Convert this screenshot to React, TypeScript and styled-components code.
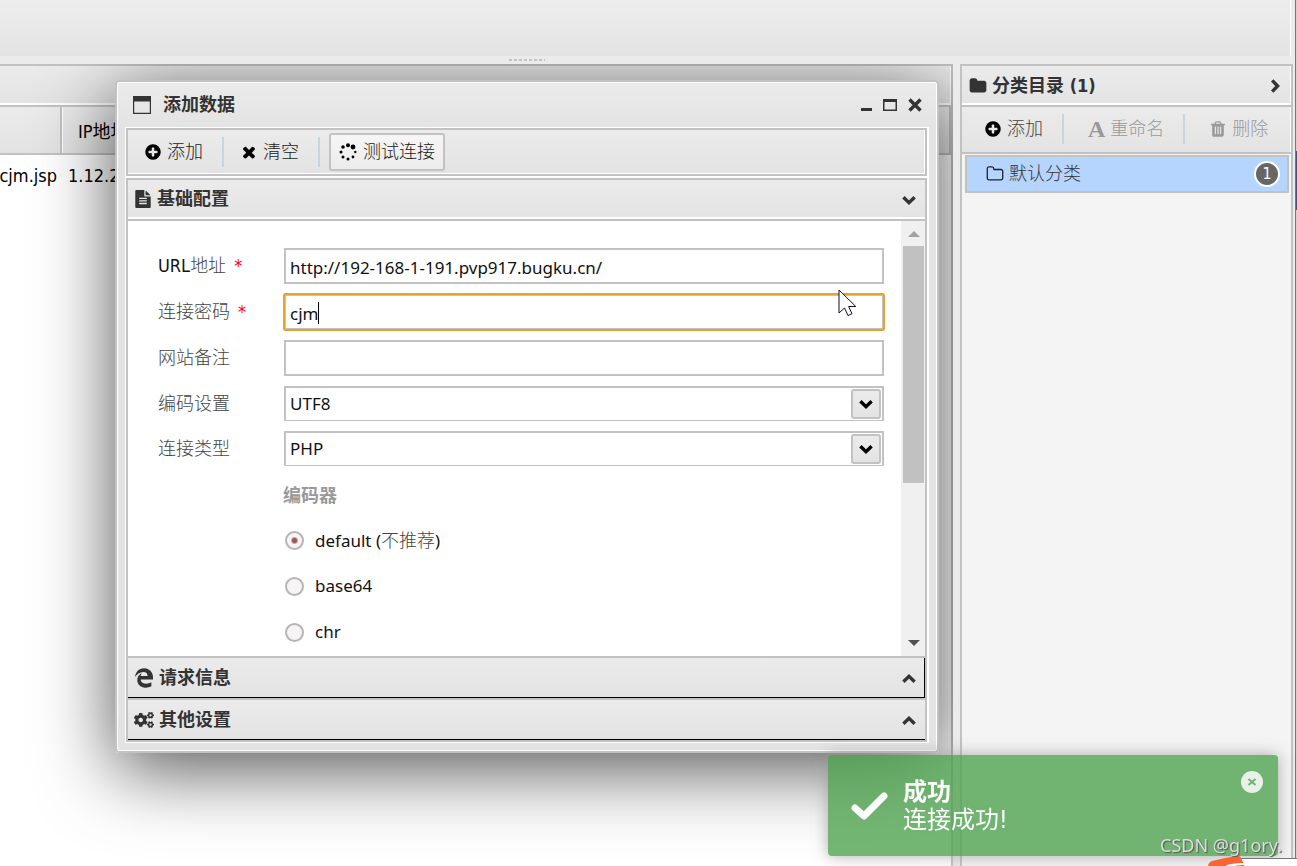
import React from "react";
import styled, { createGlobalStyle, css } from "styled-components";
import { FaCogs, FaEdgeLegacy } from "react-icons/fa";

const LINE = "#c2c2c2";
const BAR = "linear-gradient(#ebebeb, #e3e3e3)";
const UI = `"Noto Sans", "Noto Sans CJK SC", sans-serif`;
const HEADING = `"DejaVu Sans Condensed", "Noto Sans CJK SC", sans-serif`;

const GlobalStyle = createGlobalStyle`
  * { box-sizing: border-box; }
  body { margin: 0; background: #ebebeb; color: #000; font: 17px/24px ${UI}; }
  button, input, select { font: inherit; color: inherit; margin: 0; }
  button { border: 0; padding: 0; background: none; display: inline-flex; align-items: center; }
`;

const Page = styled.div`
  display: flex;
  height: 100vh;
  overflow: hidden;
`;

const Workspace = styled.div`
  flex: 1;
  min-width: 0;
  display: flex;
  flex-direction: column;
`;

const WindowEdge = styled.div`
  width: 4px;
  border-left: 2px solid #ebebeb;
  background:
    linear-gradient(90deg, #777 1px, transparent 1px),
    linear-gradient(#d0d0d0 151px, #0a64b4 151px, #0a64b4 210px, #d0d0d0 210px);
`;

const TopBar = styled.header`
  height: 56px;
  margin-right: 2px;
  border-right: 1px solid #fff;
  background: linear-gradient(#ededed, #e3e3e3);
`;

const Resizer = styled.div`
  height: 8px;
  display: flex;
  justify-content: center;
  padding: 3px 240px 0 0;
`;

const Grip = styled.span`
  width: 36px;
  height: 2px;
  background: repeating-linear-gradient(90deg, ${LINE} 0 3px, transparent 3px 5px);
`;

const Columns = styled.div`
  flex: 1;
  min-height: 0;
  display: flex;
  gap: 7px;
`;

const Main = styled.main`
  flex: 1;
  min-width: 0;
  position: relative;
  overflow: hidden;
`;

const Sheet = styled.section`
  height: 100%;
  border: solid ${LINE};
  border-width: 2px 2px 0 0;
  background: #fff;
`;

const SheetHead = styled.div`
  height: 41px;
  border-bottom: 2px solid ${LINE};
  box-shadow: inset -1px -2px #fff;
  background: ${BAR};
`;

const Grid = styled.table`
  width: 100%;
  border-collapse: separate;
  border-spacing: 0;
  table-layout: fixed;
  white-space: nowrap;
  font: 18px/24px ${HEADING};
`;

const HeadCell = styled.th`
  height: 48px;
  padding: 4px 0 0 16px;
  text-align: left;
  font-weight: 400;
  border-right: 2px solid ${LINE};
  border-bottom: 2px solid ${LINE};
  background: ${BAR};
  & + & { box-shadow: inset 1px 0 #fff; }
`;

const Cell = styled.td`
  height: 42px;
  padding: 0 0 0 6px;
`;

const NameCell = styled(Cell)`
  padding: 0 5px 0 0;
  direction: rtl;
  overflow: hidden;
`;

const Dialog = styled.section`
  position: absolute;
  top: 16px;
  left: 115px;
  right: 14px;
  padding: 0 8px 8px;
  border: 2px solid ${LINE};
  border-radius: 4px;
  background: linear-gradient(#ebebeb, #e3e3e3 46px);
  box-shadow: inset 0 0 0 1px #fff, 0 16px 76px rgba(0, 0, 0, 0.68);
`;

const DialogHead = styled.div`
  height: 45px;
  display: flex;
  align-items: center;
  padding: 0 7px 0 8px;
  gap: 12px;
`;

const Title = styled.h2`
  flex: 1;
  margin: 0;
  color: #333;
  font: 700 18px/24px ${HEADING};
`;

const WindowButtons = styled.div`
  display: flex;
  gap: 11px;
`;

const DialogBody = styled.div`
  display: flex;
  flex-direction: column;
  gap: 2px;
  border: solid #fff;
  border-width: 1px 2px 1px 1px;
  background: #fff;
`;

const Toolbar = styled.div`
  height: 48px;
  display: flex;
  align-items: center;
  border: 2px solid ${LINE};
  box-shadow: inset -1px -1px #fff;
  background: ${BAR};
`;

const Tool = styled.button<{ $active?: boolean }>`
  height: 38px;
  gap: 5px;
  padding: 0 19px 0 16px;
  color: #222;
  font: 300 18px/24px ${HEADING};
  svg { color: #000; }
  ${(p) =>
    p.$active &&
    css`
      margin-left: 9px;
      padding: 0 8px;
      gap: 6px;
      border: 2px solid ${LINE};
      border-radius: 3px;
      background: linear-gradient(#f6f6f6, #ececec);
    `}
`;

const Divider = styled.span`
  width: 2px;
  height: 30px;
  background: #c5d7de;
`;

const Accordion = styled.div`
  border: 2px solid ${LINE};
`;

const PanelHead = styled.button<{ $closed?: boolean; $edge?: boolean }>`
  width: 100%;
  height: ${(p) => (p.$closed ? 42 : 41)}px;
  gap: 5px;
  padding: 0 8px 2px 6px;
  color: #333;
  font: 700 18px/24px ${HEADING};
  border-bottom: 2px solid ${LINE};
  box-shadow: inset 0 -2px #fff;
  background: ${BAR};
  ${(p) =>
    p.$closed &&
    css`
      padding-bottom: 0;
      border-top: 2px solid ${LINE};
      border-bottom: 1px solid #000;
      box-shadow: ${p.$edge ? "inset -1px 0 #000" : "none"};
    `}
`;

const Grow = styled.span`
  flex: 1;
  display: flex;
  justify-content: flex-end;
`;

const HeadMark = styled(Grow)`
  padding-top: 2px;
`;

const PanelBody = styled.div`
  display: flex;
  height: 435px;
  overflow: hidden;
  background: #fff;
`;

const Form = styled.form`
  flex: 1;
  min-width: 0;
  display: flex;
  flex-direction: column;
  gap: 10px;
  padding: 27px 17px 0 30px;
`;

const Row = styled.div<{ $short?: boolean }>`
  display: flex;
  align-items: center;
  height: ${(p) => (p.$short ? 35 : 36)}px;
`;

const Label = styled.label`
  width: 126px;
  color: #444;
  font: 300 18px/24px ${HEADING};
  i { margin-left: 8px; color: #f00; font-style: normal; }
  b { color: #111; font-weight: 400; }
`;

const Field = styled.div`
  flex: 1;
  position: relative;
  display: flex;
`;

const Input = styled.input<{ $focus?: boolean }>`
  flex: 1;
  min-width: 0;
  height: 36px;
  padding: 2px 4px 0;
  border: 2px solid ${LINE};
  outline: none;
  background: #fff;
  color: #111;
  ${(p) =>
    p.$focus &&
    css`
      border-width: 1px;
      margin: 0 1px;
      height: 34px;
      padding: 2px 4px 0;
      border-radius: 1px;
      box-shadow: 0 0 0 2px #e5a32e;
    `}
`;

const Caret = styled.span`
  position: absolute;
  left: 34px;
  top: 7px;
  width: 1px;
  height: 22px;
  background: #000;
`;

const Select = styled.select`
  flex: 1;
  height: 35px;
  padding: 0 4px;
  appearance: none;
  border: 2px solid ${LINE};
  border-bottom-width: 1px;
  border-radius: 0;
  background: #fff;
  color: #111;
`;

const DropMark = styled.span`
  position: absolute;
  right: 3px;
  top: 3px;
  width: 30px;
  height: 30px;
  display: grid;
  place-items: center;
  border: 2px solid ${LINE};
  border-radius: 3px;
  background: ${BAR};
  pointer-events: none;
`;

const Group = styled.fieldset`
  margin: 0;
  padding: 0 0 0 125px;
  border: 0;
  display: flex;
  flex-direction: column;
  gap: 10px;
`;

const Legend = styled.legend`
  height: 46px;
  padding: 0;
  color: #999;
  font: 700 18px/40px ${HEADING};
`;

const Option = styled.label`
  display: flex;
  align-items: center;
  gap: 11px;
  height: 36px;
  padding-left: 2px;
  color: #111;
  small { color: #444; font-size: 18px; font-weight: 300; }
`;

const Radio = styled.input`
  appearance: none;
  width: 19px;
  height: 19px;
  border: 2px solid #b9b3b5;
  border-radius: 50%;
  background: #f5f5f5;
  &:checked {
    background: radial-gradient(circle, #9c5757 2px, #f5f5f5 4px);
  }
`;

const Scrollbar = styled.div`
  width: 24px;
  display: flex;
  flex-direction: column;
  align-items: center;
  padding-left: 1px;
  background: #f0f0f0;
`;

const Arrow = styled.span<{ $down?: boolean }>`
  margin: ${(p) => (p.$down ? "auto 0 10px" : "10px 0 9px")};
  border: solid transparent;
  border-width: 0 6px;
  ${(p) => (p.$down ? "border-top: 6px solid #505050;" : "border-bottom: 6px solid #a3a3a3;")}
`;

const Thumb = styled.span`
  width: 21px;
  height: 237px;
  background: #c1c1c1;
`;

const Side = styled.aside`
  width: 333px;
  display: flex;
  flex-direction: column;
  border: solid ${LINE};
  border-width: 2px 2px 0;
  background: #f4f4f4;
`;

const SideHead = styled.div`
  height: 41px;
  display: flex;
  align-items: center;
  gap: 5px;
  padding: 0 8px 0 7px;
  border-bottom: 2px solid ${LINE};
  box-shadow: inset -1px -2px #fff;
  background: ${BAR};
  color: #333;
`;

const SideTools = styled.div`
  height: 47px;
  display: flex;
  align-items: center;
  padding-bottom: 2px;
  border-bottom: 2px solid ${LINE};
  box-shadow: inset -1px 0 #fff;
  background: ${BAR};
`;

const SideTool = styled(Tool)`
  padding: 0 19px 0 22px;
  color: #444;
  &:disabled { color: #999; padding-left: 24px; }
  &:disabled svg { color: #999; }
`;

const LetterMark = styled.span`
  font: 700 24px/24px "Liberation Serif", serif;
`;

const Item = styled.button`
  height: 38px;
  margin: 1px 2px 0 3px;
  padding: 0 7px 0 19px;
  gap: 5px;
  border: 2px solid ${LINE};
  background: #b5d5ff;
  color: #333;
  font: 300 18px/24px ${HEADING};
  svg { color: #222; }
`;

const Badge = styled.span`
  width: 26px;
  height: 26px;
  border: 2px solid #fff;
  border-radius: 50%;
  background: #666;
  color: #fff;
  font-size: 16px;
  font-weight: 400;
  line-height: 22px;
  text-align: center;
`;

const Toast = styled.div`
  position: fixed;
  right: 19px;
  bottom: 10px;
  width: 450px;
  height: 101px;
  display: flex;
  align-items: center;
  gap: 15px;
  padding: 0 14px 0 23px;
  border-radius: 4px;
  background: #51a351;
  box-shadow: 0 0 16px #999;
  color: #fff;
  font: 24px/28px ${HEADING};
  opacity: 0.8;
`;

const ToastText = styled.div`
  flex: 1;
  strong { display: block; }
`;

const ToastClose = styled.button`
  align-self: flex-start;
  margin-top: 15px;
`;

const Watermark = styled.span`
  position: fixed;
  right: 15px;
  bottom: 9px;
  color: #dcdcdc;
  font: 18px/24px "Noto Sans", sans-serif;
  text-shadow: 1px 1px 1px #555;
`;

const ImeBar = styled.div`
  position: fixed;
  right: 0;
  bottom: 0;
  width: 90px;
  height: 14px;
`;

const PointerMark = styled.svg`
  position: absolute;
  top: 207px;
  right: 80px;
`;

const shapes = {
  plus: "M1344 960v-128q0-26-19-45t-45-19h-256v-256q0-26-19-45t-45-19h-128q-26 0-45 19t-19 45v256h-256q-26 0-45 19t-19 45v128q0 26 19 45t45 19h256v256q0 26 19 45t45 19h128q26 0 45-19t19-45v-256h256q26 0 45-19t19-45zm320-64q0 209-103 385.5t-279.5 279.5-385.5 103-385.5-103-279.5-279.5-103-385.5 103-385.5 279.5-279.5 385.5-103 385.5 103 279.5 279.5 103 385.5z",
  times: "M1490 1322q0 40-28 68l-136 136q-28 28-68 28t-68-28l-294-294-294 294q-28 28-68 28t-68-28l-136-136q-28-28-28-68t28-68l294-294-294-294q-28-28-28-68t28-68l136-136q28-28 68-28t68 28l294 294 294-294q28-28 68-28t68 28l136 136q28 28 28 68t-28 68l-294 294 294 294q28 28 28 68z",
  file: "M1596 476q14 14 28 36h-472v-472q22 14 36 28zm-476 164h544v1056q0 40-28 68t-68 28h-1344q-40 0-68-28t-28-68v-1600q0-40 28-68t68-28h800v544q0 40 28 68t68 28zm160 736v-64q0-14-9-23t-23-9h-704q-14 0-23 9t-9 23v64q0 14 9 23t23 9h704q14 0 23-9t9-23zm0-256v-64q0-14-9-23t-23-9h-704q-14 0-23 9t-9 23v64q0 14 9 23t23 9h704q14 0 23-9t9-23zm0-256v-64q0-14-9-23t-23-9h-704q-14 0-23 9t-9 23v64q0 14 9 23t23 9h704q14 0 23-9t9-23z",
  folder: "M1728 608v704q0 92-66 158t-158 66h-1216q-92 0-158-66t-66-158v-960q0-92 66-158t158-66h320q92 0 158 66t66 158v32h672q92 0 158 66t66 158z",
  folderOpen: "M1600 1312v-704q0-40-28-68t-68-28h-704q-40 0-68-28t-28-68v-64q0-40-28-68t-68-28h-320q-40 0-68 28t-28 68v960q0 40 28 68t68 28h1216q40 0 68-28t28-68zm128-704v704q0 92-66 158t-158 66h-1216q-92 0-158-66t-66-158v-960q0-92 66-158t158-66h320q92 0 158 66t66 158v32h672q92 0 158 66t66 158z",
  trash: "M704 1376v-704q0-14-9-23t-23-9h-64q-14 0-23 9t-9 23v704q0 14 9 23t23 9h64q14 0 23-9t9-23zm256 0v-704q0-14-9-23t-23-9h-64q-14 0-23 9t-9 23v704q0 14 9 23t23 9h64q14 0 23-9t9-23zm256 0v-704q0-14-9-23t-23-9h-64q-14 0-23 9t-9 23v704q0 14 9 23t23 9h64q14 0 23-9t9-23zm-544-992h448l-48-117q-7-9-17-11h-317q-10 2-17 11zm928 32v64q0 14-9 23t-23 9h-96v948q0 83-47 143.5t-113 60.5h-832q-66 0-113-58.5t-47-141.5v-952h-96q-14 0-23-9t-9-23v-64q0-14 9-23t23-9h309l70-167q15-37 54-63t79-26h320q40 0 79 26t54 63l70 167h309q14 0 23 9t9 23z",
};

const Icon = ({ name, size = 18 }: { name: keyof typeof shapes; size?: number }) => (
  <svg width={size} height={size} viewBox="0 0 1792 1792" fill="currentColor" aria-hidden="true">
    <path d={shapes[name]} />
  </svg>
);

const turns = { down: 0, up: 180, right: 270 };
const Chevron = ({ to }: { to: keyof typeof turns }) => (
  <svg width="16" height="16" viewBox="0 0 16 16" fill="none" stroke="currentColor" strokeWidth="3.4" aria-hidden="true">
    <path d="M2.4 5.2L8 10.6l5.6-5.4" transform={`rotate(${turns[to]} 8 8)`} />
  </svg>
);

const Spinner = () => (
  <svg width="18" height="18" viewBox="0 0 18 18" fill="currentColor" aria-hidden="true">
    <circle cx="9" cy="2.3" r="2" />
    <circle cx="14" cy="4" r="2.4" />
    <circle cx="16.3" cy="9" r="1.2" />
    <circle cx="14" cy="14" r="1.4" />
    <circle cx="9" cy="16" r="1.5" />
    <circle cx="4" cy="14" r="1.5" />
    <circle cx="2" cy="9" r="1.5" />
    <circle cx="4" cy="4" r="1.8" />
  </svg>
);

export default function App() {
  return (
    <Page>
      <GlobalStyle />
      <Workspace>
        <TopBar />
        <Resizer><Grip /></Resizer>
        <Columns>
          <Main>
            <Sheet>
              <SheetHead />
              <Grid>
                <colgroup><col width="62" /><col /></colgroup>
                <thead><tr><HeadCell /><HeadCell>IP地址</HeadCell></tr></thead>
                <tbody><tr><NameCell>cjm.jsp</NameCell><Cell>1.12.2</Cell></tr></tbody>
              </Grid>
            </Sheet>
            <Dialog role="dialog" aria-label="添加数据">
              <DialogHead>
                <svg width="18" height="18" viewBox="0 0 18 18" fill="#333" aria-hidden="true">
                  <path fillRule="evenodd" d="M0 0h18v18H0zM1.2 5.5v11.3h15.6V5.5z" />
                </svg>
                <Title>添加数据</Title>
                <WindowButtons>
                  <button aria-label="最小化"><svg width="11" height="16"><path d="M0 11h11v3H0z" fill="#333" /></svg></button>
                  <button aria-label="最大化"><svg width="14" height="16"><path fillRule="evenodd" d="M0 2h14v12H0zM1.5 5v7.5h11V5z" fill="#333" /></svg></button>
                  <button aria-label="关闭"><svg width="14" height="16"><path d="M1.5 2.5l11 11M12.5 2.5l-11 11" stroke="#333" strokeWidth="3.4" /></svg></button>
                </WindowButtons>
              </DialogHead>
              <DialogBody>
                <Toolbar>
                  <Tool><Icon name="plus" />添加</Tool>
                  <Divider />
                  <Tool><Icon name="times" />清空</Tool>
                  <Divider />
                  <Tool $active><Spinner />测试连接</Tool>
                </Toolbar>
                <Accordion>
                  <PanelHead><Icon name="file" />基础配置<HeadMark><Chevron to="down" /></HeadMark></PanelHead>
                  <PanelBody>
                    <Form>
                      <Row>
                        <Label htmlFor="url"><b>URL</b>地址<i>*</i></Label>
                        <Field><Input id="url" defaultValue="http://192-168-1-191.pvp917.bugku.cn/" /></Field>
                      </Row>
                      <Row>
                        <Label htmlFor="pwd">连接密码<i>*</i></Label>
                        <Field><Input id="pwd" $focus defaultValue="cjm" /><Caret /></Field>
                      </Row>
                      <Row>
                        <Label htmlFor="note">网站备注</Label>
                        <Field><Input id="note" /></Field>
                      </Row>
                      <Row $short>
                        <Label htmlFor="encode">编码设置</Label>
                        <Field><Select id="encode"><option>UTF8</option></Select><DropMark><Chevron to="down" /></DropMark></Field>
                      </Row>
                      <Row $short>
                        <Label htmlFor="type">连接类型</Label>
                        <Field><Select id="type"><option>PHP</option></Select><DropMark><Chevron to="down" /></DropMark></Field>
                      </Row>
                      <Group>
                        <Legend>编码器</Legend>
                        <Option><Radio type="radio" name="encoder" defaultChecked /><span>default (<small>不推荐</small>)</span></Option>
                        <Option><Radio type="radio" name="encoder" />base64</Option>
                        <Option><Radio type="radio" name="encoder" />chr</Option>
                      </Group>
                    </Form>
                    <Scrollbar><Arrow /><Thumb /><Arrow $down /></Scrollbar>
                  </PanelBody>
                  <PanelHead $closed $edge><FaEdgeLegacy size={20} />请求信息<HeadMark><Chevron to="up" /></HeadMark></PanelHead>
                  <PanelHead $closed><FaCogs size={20} />其他设置<HeadMark><Chevron to="up" /></HeadMark></PanelHead>
                </Accordion>
              </DialogBody>
              <PointerMark width="19" height="28" viewBox="0 0 19 28" aria-hidden="true">
                <path d="M1 1v23l5.5-5 3.5 7.5 4-1.8-3.4-7.2h7.2z" fill="#fff" stroke="#112" strokeWidth="1" />
              </PointerMark>
            </Dialog>
          </Main>
          <Side>
            <SideHead>
              <Icon name="folder" />
              <Title>分类目录 (1)</Title>
              <Chevron to="right" />
            </SideHead>
            <SideTools>
              <SideTool><Icon name="plus" />添加</SideTool>
              <Divider />
              <SideTool disabled><LetterMark aria-hidden="true">A</LetterMark>重命名</SideTool>
              <Divider />
              <SideTool disabled><Icon name="trash" />删除</SideTool>
            </SideTools>
            <Item><Icon name="folderOpen" />默认分类<Grow><Badge>1</Badge></Grow></Item>
          </Side>
        </Columns>
      </Workspace>
      <WindowEdge />
      <Toast role="status">
        <svg width="37" height="30" viewBox="0 0 37 30" fill="none" stroke="#fff" strokeWidth="7" strokeLinecap="round" strokeLinejoin="round" aria-hidden="true">
          <path d="M4 17l9 8L33 5" />
        </svg>
        <ToastText><strong>成功</strong>连接成功!</ToastText>
        <ToastClose aria-label="关闭">
          <svg width="24" height="24" viewBox="0 0 24 24">
            <circle cx="12" cy="12" r="11" fill="#fff" fillOpacity="0.85" />
            <path d="M8.5 9l7 6M15.5 9l-7 6" stroke="#51a351" strokeWidth="2" />
          </svg>
        </ToastClose>
      </Toast>
      <ImeBar>
        <svg width="90" height="14" viewBox="0 0 90 14" aria-hidden="true">
          <path d="M34 3h56v11H34z" fill="#fff" />
          <path d="M34 2.5h56" stroke="#777" />
          <path d="M1 14q-1-7 4-9Q16 2 30 0q3-1 5 4l4 10z" fill="#fa6432" />
          <path d="M11 14q9-8 27-7v2q-14 0-19 5z" fill="#fff" />
          <path d="M57 12h3v2h-3zM65 12h3v2h-3z" fill="#2a6fb5" />
        </svg>
      </ImeBar>
      <Watermark>CSDN @g1ory.</Watermark>
    </Page>
  );
}
